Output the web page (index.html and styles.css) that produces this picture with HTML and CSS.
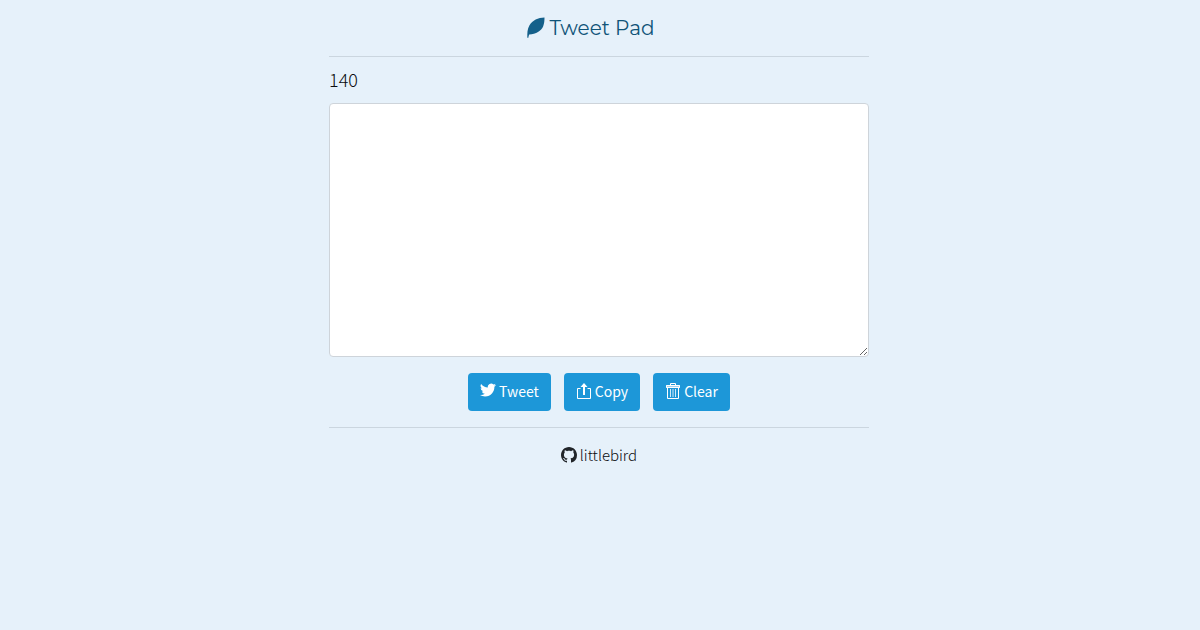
FILE: index.html
```html
<!DOCTYPE html>
<html lang="en">
<head>
<meta charset="utf-8">
<meta name="viewport" content="width=device-width, initial-scale=1">
<title>Tweet Pad</title>
<link rel="stylesheet" href="styles.css">
</head>
<body>
<div class="container">
  <header class="header">
    <svg class="leaf" viewBox="0 0 18 22" aria-hidden="true"><path d="M17.500.6C11 .8 5.500 3.400 2.500 8.200.2 12 .3 16 .3 20.800h1.100c.1-1.500.4-2.400.8-3.300C9 17.300 14.300 14 16.200 9.300 17.300 6.600 17.500 3.500 17.500.6z"/></svg>
    <h1 class="title">Tweet Pad</h1>
  </header>
  <main class="pad">
    <label class="count" for="tweet">140</label>
    <textarea class="editor" id="tweet"></textarea>
    <div class="actions">
      <button class="btn" type="button">
        <svg class="icon" viewBox="0 0 16 16" aria-hidden="true"><path fill="currentColor" d="M16 2.040a6.600 6.600 0 0 1-1.890.52 3.300 3.300 0 0 0 1.450-1.820 6.600 6.600 0 0 1-2.090.8A3.280 3.280 0 0 0 7.880 4.530 9.320 9.320 0 0 1 1.110 1.100a3.280 3.280 0 0 0 1.020 4.380 3.300 3.300 0 0 1-1.490-.41v.04a3.280 3.280 0 0 0 2.630 3.220 3.300 3.300 0 0 1-1.480.06 3.280 3.280 0 0 0 3.070 2.280A6.590 6.590 0 0 1 0 12.030a9.290 9.290 0 0 0 5.030 1.470c6.040 0 9.340-5 9.340-9.340l-.01-.42A6.700 6.700 0 0 0 16 2.040z"/></svg>
        <span>Tweet</span>
      </button>
      <button class="btn" type="button">
        <svg class="icon" viewBox="0 0 16 16" aria-hidden="true"><path fill="none" stroke="currentColor" d="M4.500 5.500h-3v10h13v-10h-3"/><path fill="currentColor" d="M8 0l3.500 4H9v8H7V4H4.500z"/></svg>
        <span>Copy</span>
      </button>
      <button class="btn" type="button">
        <svg class="icon" viewBox="0 0 16 16" aria-hidden="true"><path fill="currentColor" fill-opacity=".6" d="M1 2h14v3H1z"/><path fill="none" stroke="currentColor" d="M5.500 2V.5h5V2M1.500 4.500v-2h13v2zM2.500 4.500v11h11v-11"/><path fill="none" stroke="currentColor" stroke-opacity=".8" d="M5.500 6v8M8 6v8M10.500 6v8"/></svg>
        <span>Clear</span>
      </button>
    </div>
  </main>
  <footer class="footer">
    <a class="repo" href="#littlebird">
      <svg class="icon" viewBox="0 0 16 16" aria-hidden="true"><path fill="#212529" d="M8 0C3.580 0 0 3.580 0 8c0 3.540 2.290 6.530 5.470 7.590.4.070.55-.17.55-.38 0-.19-.01-.82-.01-1.490-2.010.37-2.530-.49-2.690-.94-.09-.23-.48-.94-.82-1.130-.28-.15-.68-.52-.01-.53.63-.01 1.080.58 1.230.82.72 1.210 1.870.87 2.330.66.07-.52.28-.87.51-1.070-1.780-.2-3.640-.89-3.640-3.950 0-.87.31-1.590.82-2.150-.08-.2-.36-1.020.08-2.120 0 0 .67-.21 2.200.82.64-.18 1.320-.27 2-.27s1.360.09 2 .27c1.530-1.040 2.200-.82 2.200-.82.44 1.100.16 1.920.08 2.120.51.56.82 1.270.82 2.150 0 3.070-1.870 3.750-3.650 3.950.29.25.54.73.54 1.480 0 1.070-.01 1.930-.01 2.200 0 .21.15.46.55.38A8.010 8.010 0 0 0 16 8c0-4.420-3.580-8-8-8z"/></svg>
      <span>littlebird</span>
    </a>
  </footer>
</div>
</body>
</html>
```
FILE: styles.css
```css
* { box-sizing: border-box; }

body {
  margin: 0;
  padding-right: 2px;
  background: #e6f1fa;
  color: #0a0c0e;
  font-family: "Source Sans Pro", "Noto Sans CJK SC", sans-serif;
  font-size: 15px;
  font-weight: 300;
  line-height: 22px;
}

.container {
  max-width: 540px;
  margin: 0 auto;
}

.header {
  display: flex;
  justify-content: center;
  align-items: center;
  gap: 4px;
  padding: 16px 16px 16px 0;
  border-bottom: 1px solid #cbd6df;
}

.leaf {
  width: 18px;
  height: 22px;
  fill: #14608a;
}

.title {
  margin: 0;
  color: #105478;
  font-family: Montserrat, Inter, sans-serif;
  font-size: 20px;
  font-weight: 400;
  line-height: 24px;
}

.pad {
  padding: 8px 0 16px;
  border-bottom: 1px solid #cbd6df;
}

.count {
  display: block;
  margin-bottom: 10px;
  font-size: 18px;
  line-height: 28px;
}

.editor {
  display: block;
  width: 100%;
  height: 254px;
  padding: 6px 12px;
  border: 1px solid #ced4da;
  border-radius: 4px;
  background: #fff;
  color: inherit;
  font: inherit;
  resize: vertical;
}

.actions {
  display: flex;
  justify-content: center;
  gap: 13px;
  margin-top: 16px;
}

.btn {
  display: flex;
  align-items: center;
  gap: 3px;
  padding: 7px 12px 9px;
  border: 0;
  border-radius: 4px;
  background: #1d97d8;
  color: #fff;
  font: inherit;
  font-size: 14px;
  font-weight: 400;
  cursor: pointer;
}

.icon {
  width: 16px;
  height: 16px;
}

.footer {
  display: flex;
  justify-content: center;
  padding: 16px 0;
}

.repo {
  display: flex;
  align-items: center;
  gap: 3px;
  color: inherit;
  text-decoration: none;
}
```
